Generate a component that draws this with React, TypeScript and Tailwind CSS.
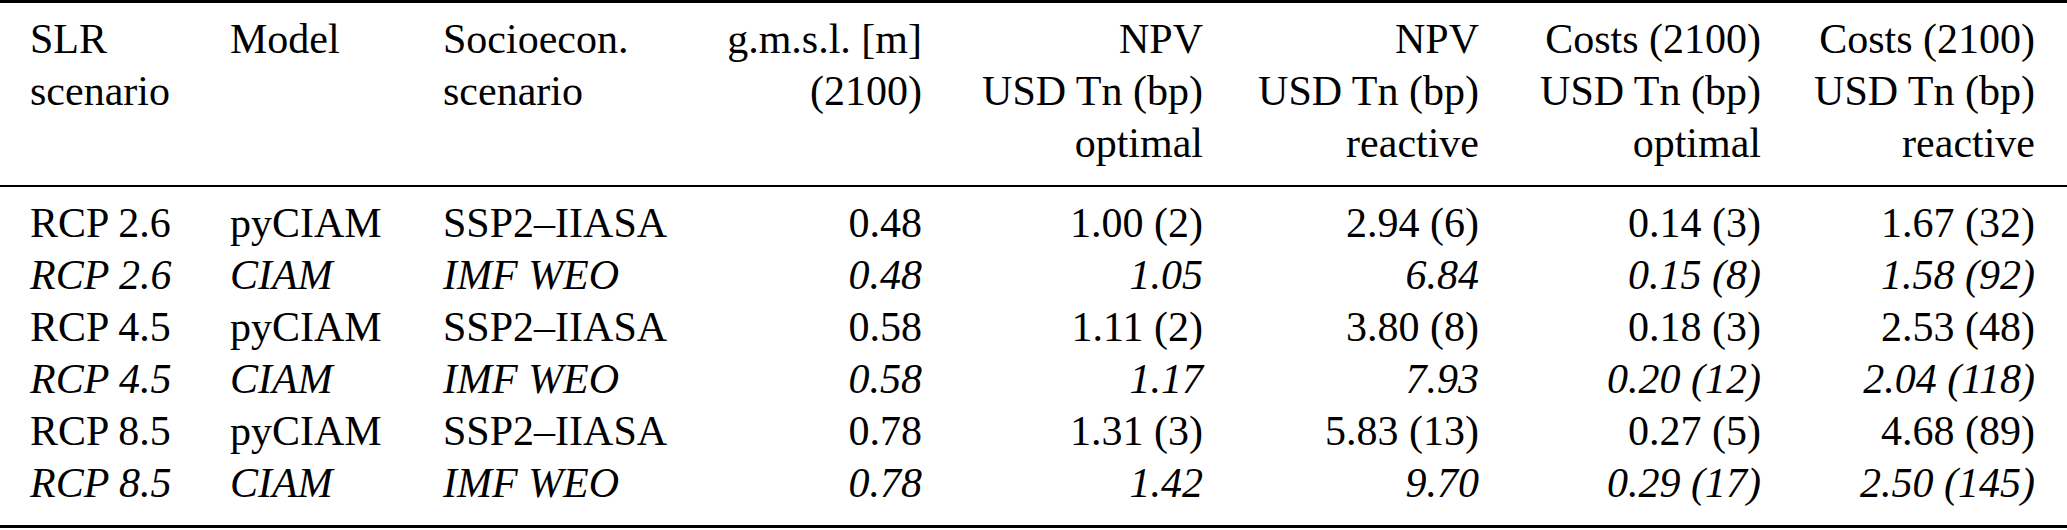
import React from "react";

type Row = { cells: string[]; italic: boolean };

const rows: Row[] = [
  { cells: ["RCP 2.6", "pyCIAM", "SSP2–IIASA", "0.48", "1.00 (2)", "2.94 (6)", "0.14 (3)", "1.67 (32)"], italic: false },
  { cells: ["RCP 2.6", "CIAM", "IMF WEO", "0.48", "1.05", "6.84", "0.15 (8)", "1.58 (92)"], italic: true },
  { cells: ["RCP 4.5", "pyCIAM", "SSP2–IIASA", "0.58", "1.11 (2)", "3.80 (8)", "0.18 (3)", "2.53 (48)"], italic: false },
  { cells: ["RCP 4.5", "CIAM", "IMF WEO", "0.58", "1.17", "7.93", "0.20 (12)", "2.04 (118)"], italic: true },
  { cells: ["RCP 8.5", "pyCIAM", "SSP2–IIASA", "0.78", "1.31 (3)", "5.83 (13)", "0.27 (5)", "4.68 (89)"], italic: false },
  { cells: ["RCP 8.5", "CIAM", "IMF WEO", "0.78", "1.42", "9.70", "0.29 (17)", "2.50 (145)"], italic: true },
];

const header: string[][] = [
  ["SLR", "scenario"],
  ["Model"],
  ["Socioecon.", "scenario"],
  ["g.m.s.l. [m]", "(2100)"],
  ["NPV", "USD Tn (bp)", "optimal"],
  ["NPV", "USD Tn (bp)", "reactive"],
  ["Costs (2100)", "USD Tn (bp)", "optimal"],
  ["Costs (2100)", "USD Tn (bp)", "reactive"],
];

const grid =
  "grid grid-cols-[200px_213px_250px_229px_281px_276px_282px_274px] pl-[30px] pr-[32px]";

export default function App() {
  return (
    <div className="w-[2067px] h-[530px] bg-white text-black text-[42px] leading-[52px] font-['Liberation_Serif','LiberationSerif','Times_New_Roman','Tinos','Nimbus_Roman','DejaVu_Serif',serif]">
      <div className="border-t-[3px] border-black" />
      <div className={`${grid} pt-[10px] pb-[16px]`}>
        {header.map((lines, i) => (
          <div key={i} className={i < 3 ? "text-left" : "text-right"}>
            {lines.map((l, j) => (
              <div key={j} className="whitespace-nowrap">
                {l}
              </div>
            ))}
          </div>
        ))}
      </div>
      <div className="border-t-[2px] border-black" />
      <div className="pt-[10px] pb-[16px]">
        {rows.map((r, i) => (
          <div key={i} className={`${grid} ${r.italic ? "italic" : ""}`}>
            {r.cells.map((c, j) => (
              <div key={j} className={`whitespace-nowrap ${j < 3 ? "text-left" : "text-right"}`}>
                {c}
              </div>
            ))}
          </div>
        ))}
      </div>
      <div className="border-t-[3px] border-black" />
    </div>
  );
}
